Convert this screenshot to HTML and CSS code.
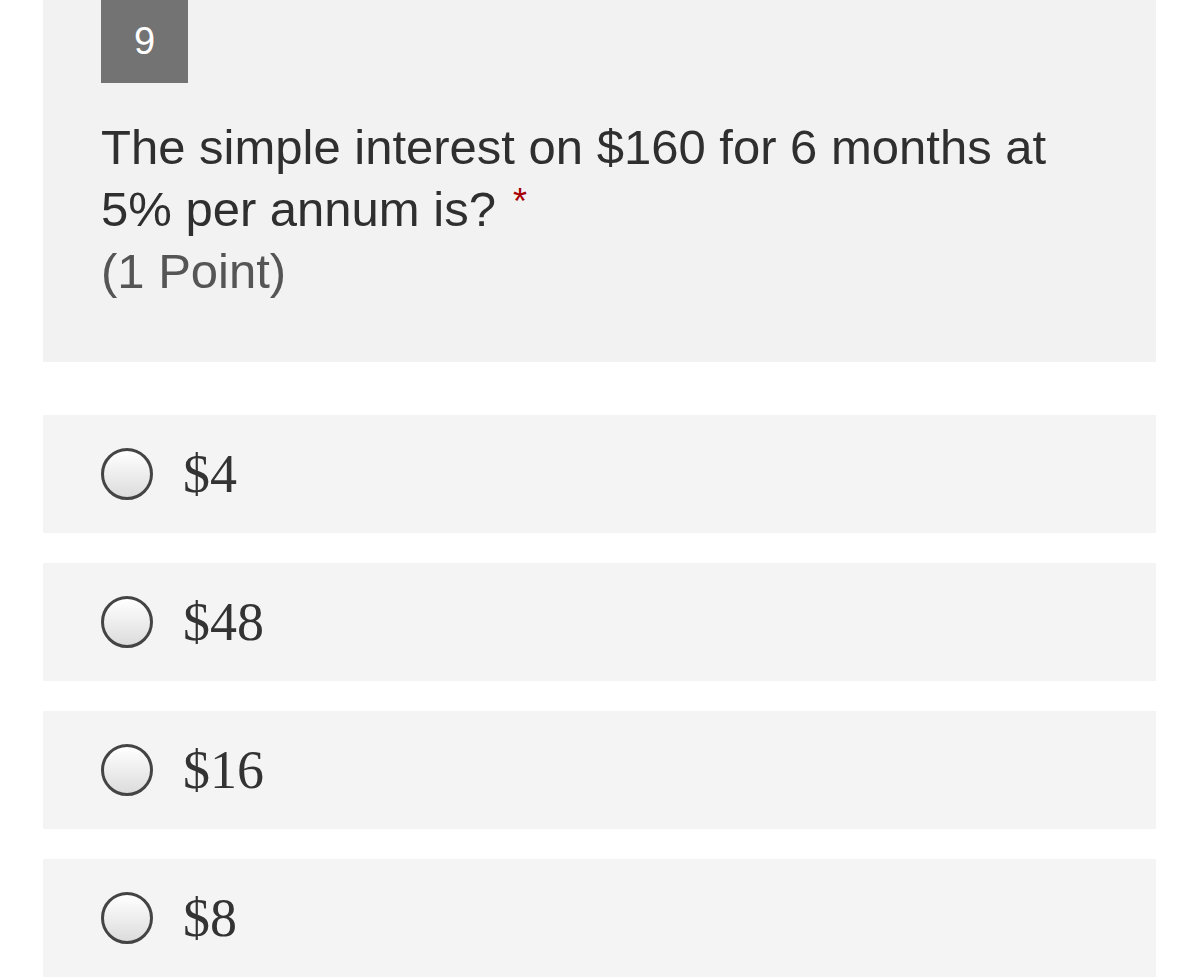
FILE: index.html
```html
<!DOCTYPE html>
<html>
<head>
<meta charset="utf-8">
<link rel="stylesheet" href="styles.css">
</head>
<body>
<div class="page">
  <div class="question">
    <div class="badge">9</div>
    <div class="title">The simple interest on $160 for 6 months at 5% per annum is?<span class="req">*</span></div>
    <div class="points">(1 Point)</div>
  </div>
  <div class="options">
    <label class="option"><span class="radio"></span><span class="label">$4</span></label>
    <label class="option"><span class="radio"></span><span class="label">$48</span></label>
    <label class="option"><span class="radio"></span><span class="label">$16</span></label>
    <label class="option"><span class="radio"></span><span class="label">$8</span></label>
  </div>
</div>
</body>
</html>
```

FILE: styles.css
```css
html, body {
  margin: 0;
  padding: 0;
  background: #ffffff;
}
.page {
  width: 1113px;
  margin-left: 43px;
  font-family: "Liberation Sans", Arial, sans-serif;
}
.question {
  background: #f2f2f3;
  padding: 0 58px 0 58px;
  height: 362px;
  box-sizing: border-box;
}
.badge {
  width: 87px;
  height: 83px;
  background: #737373;
  color: #ffffff;
  font-size: 38px;
  display: flex;
  align-items: center;
  justify-content: center;
}
.title {
  margin-top: 33px;
  font-size: 49px;
  line-height: 62px;
  color: #2f2f2f;
}
.req {
  display: inline-block;
  color: #a80000;
  margin-left: 17px;
  font-size: 36px;
  line-height: 36px;
  vertical-align: 12px;
}
.points {
  font-size: 49px;
  line-height: 62px;
  color: #555555;
}
.options {
  margin-top: 53px;
  display: flex;
  flex-direction: column;
  gap: 30px;
}
.option {
  height: 118px;
  background: #f4f4f5;
  display: flex;
  align-items: center;
  padding-left: 58px;
}
.radio {
  width: 46px;
  height: 46px;
  border: 3px solid #444444;
  border-radius: 50%;
  background: linear-gradient(#ffffff, #dcdcdc);
  flex: none;
}
.label {
  margin-left: 30px;
  font-family: "Liberation Serif", "Times New Roman", serif;
  font-size: 54px;
  color: #333333;
}
```
